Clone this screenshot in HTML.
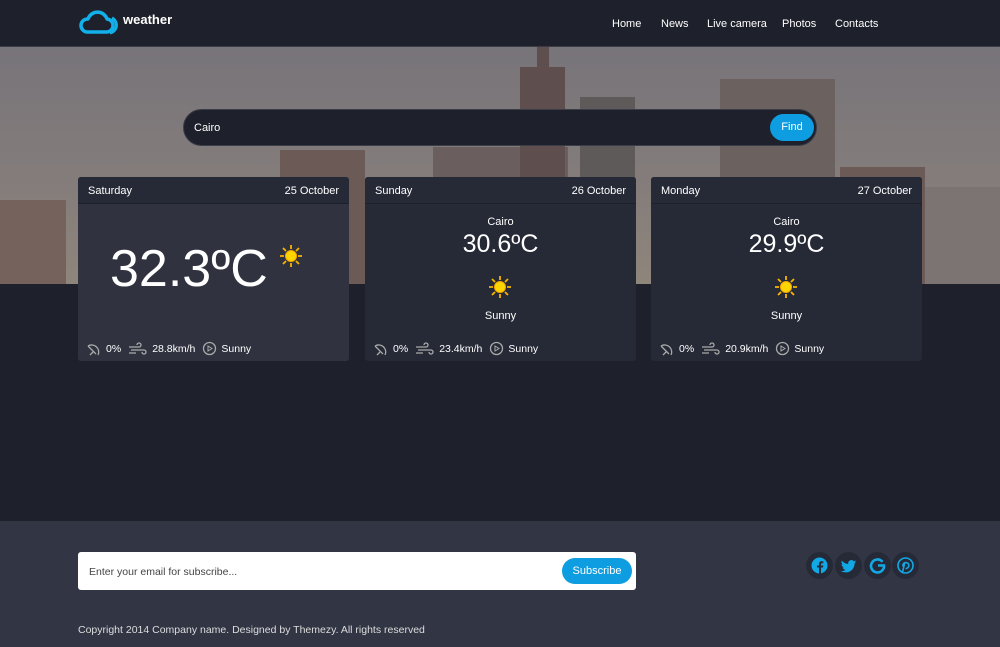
<!DOCTYPE html>
<html><head><meta charset="utf-8"><style>
*{margin:0;padding:0;box-sizing:border-box}
body{width:1000px;height:647px;overflow:hidden;background:#1e202b;font-family:"Liberation Sans",sans-serif;color:#fff;position:relative}
.hdr{position:absolute;left:0;top:0;width:1000px;height:47px;background:#1e202b;border-bottom:1px solid #3a3c48}
.logo{position:absolute;left:78px;top:8px}
.lt{position:absolute;left:123px;top:12px;font-weight:bold;font-size:13px;white-space:nowrap}
.nav{position:absolute;top:18px;font-size:11px}
.hero{position:absolute;left:0;top:47px;width:1000px;height:237px;background:linear-gradient(#77747a,#857d7b 60%,#8e857b);overflow:hidden}
.b{position:absolute;background:#6c5a56}
.search{position:absolute;left:183px;top:109px;width:634px;height:37px;background:#1e202b;border-radius:19px;border:1px solid #3a3c48}
.search .t{position:absolute;left:10px;top:12px;font-size:11px}
.find{position:absolute;right:2px;top:4px;width:44px;height:27px;border-radius:14px;background:#0d9de0;font-size:11px;text-align:center;line-height:27px}
.card{position:absolute;top:177px;width:271px;height:184px;background:#262936;border-radius:3px}
.card.a{background:#30333f}
.ch{height:27px;border-bottom:1px solid #1e202b;background:#262936;border-radius:3px 3px 0 0;font-size:11px;padding:8px 10px;display:flex;justify-content:space-between}
.city{position:absolute;top:39px;width:100%;text-align:center;font-size:11px}
.temp{position:absolute;top:53px;width:100%;text-align:center;font-size:25px}
.sunny{position:absolute;top:133px;width:100%;text-align:center;font-size:11px}
.ft{position:absolute;left:8px;top:164px;font-size:10.5px;display:flex;align-items:center;gap:4px}
.foot{position:absolute;left:0;top:521px;width:1000px;height:126px;background:#323544}
.email{position:absolute;left:78px;top:31px;width:558px;height:38px;background:#fff;border-radius:3px}
.email .t{position:absolute;left:11px;top:14px;font-size:10.5px;color:#444}
.sub{position:absolute;right:4px;top:6px;width:70px;height:26px;border-radius:13px;background:#0d9de0;color:#fff;font-size:11px;text-align:center;line-height:26px}
.soc{position:absolute;top:31px;width:27px;height:27px;border-radius:50%;background:#262936}
.copy{position:absolute;left:78px;top:103px;font-size:10.5px;color:#ddd}
</style></head><body>
<div class="hero">
<div class="b" style="left:0;top:153px;width:66px;height:90px;background:#76625d"></div>
<div class="b" style="left:280px;top:103px;width:85px;height:140px"></div>
<div class="b" style="left:433px;top:100px;width:135px;height:140px;background:#6a5e5e"></div>
<div class="b" style="left:520px;top:20px;width:45px;height:200px;background:#5f4e4e"></div>
<div class="b" style="left:537px;top:0;width:12px;height:30px;background:#5f4e4e"></div>
<div class="b" style="left:580px;top:50px;width:55px;height:180px;background:#5e5a5a"></div>
<div class="b" style="left:720px;top:32px;width:115px;height:210px;background:#6b6260"></div>
<div class="b" style="left:840px;top:120px;width:85px;height:120px"></div>
<div class="b" style="left:925px;top:140px;width:75px;height:100px;background:#7c7472"></div>
</div>
<div class="hdr">
<svg class="logo" width="44" height="28" viewBox="0 0 44 28"><path d="M9 24 H28 A6.500 6.500 0 0 0 29 11 A10 10 0 0 0 10 11 A6.500 6.500 0 0 0 9 24 Z" fill="none" stroke="#12b0ea" stroke-width="3.500" stroke-linejoin="round"/><path d="M34 10 A8 8 0 0 1 32 25" fill="none" stroke="#12b0ea" stroke-width="3"/></svg>
<div class="lt">weather</div>
<div class="nav" style="left:612px">Home</div>
<div class="nav" style="left:661px">News</div>
<div class="nav" style="left:707px">Live camera</div>
<div class="nav" style="left:782px">Photos</div>
<div class="nav" style="left:835px">Contacts</div>
</div>
<div class="search"><div class="t">Cairo</div><div class="find">Find</div></div>

<div class="card a" style="left:78px"><div class="ch"><span>Saturday</span><span>25 October</span></div>
<div style="position:absolute;left:32px;top:62px;font-size:52px;line-height:60px">32.3ºC</div>
<svg style="position:absolute;left:201px;top:67px" width="24" height="24" viewBox="0 0 24 24"><g stroke="#f7b500" stroke-width="1.8"><path d="M12 1v4M12 19v4M1 12h4M19 12h4M4 4l3 3M17 17l3 3M20 4l-3 3M7 17l-3 3"/></g><circle cx="12" cy="12" r="5.5" fill="#ffd500" stroke="#f5a800"/></svg>
<div class="ft"><svg width="16" height="14"><path d="M2 4a7 7 0 0 1 10 9M2 4l8 8M7 10l-3 3" fill="none" stroke="#aaa" stroke-width="1.3"/></svg>0% <svg width="20" height="14" style="margin-left:3px"><path d="M1 5h10a2 2 0 1 0-2-2M3 8h13a2 2 0 1 1-2 2M1 11h7" fill="none" stroke="#aaa" stroke-width="1.3"/></svg>28.8km/h <svg width="15" height="15" style="margin-left:3px"><circle cx="7.5" cy="7.5" r="6" fill="none" stroke="#aaa" stroke-width="1.3"/><path d="M6 5l4 2.5L6 10z" fill="none" stroke="#aaa"/></svg>Sunny</div></div>

<div class="card" style="left:365px"><div class="ch"><span>Sunday</span><span>26 October</span></div>
<div class="city">Cairo</div><div class="temp">30.6ºC</div>
<svg style="position:absolute;left:123px;top:98px" width="24" height="24" viewBox="0 0 24 24"><g stroke="#f7b500" stroke-width="1.8"><path d="M12 1v4M12 19v4M1 12h4M19 12h4M4 4l3 3M17 17l3 3M20 4l-3 3M7 17l-3 3"/></g><circle cx="12" cy="12" r="5.5" fill="#ffd500" stroke="#f5a800"/></svg>
<div class="sunny">Sunny</div>
<div class="ft"><svg width="16" height="14"><path d="M2 4a7 7 0 0 1 10 9M2 4l8 8M7 10l-3 3" fill="none" stroke="#aaa" stroke-width="1.3"/></svg>0% <svg width="20" height="14" style="margin-left:3px"><path d="M1 5h10a2 2 0 1 0-2-2M3 8h13a2 2 0 1 1-2 2M1 11h7" fill="none" stroke="#aaa" stroke-width="1.3"/></svg>23.4km/h <svg width="15" height="15" style="margin-left:3px"><circle cx="7.5" cy="7.5" r="6" fill="none" stroke="#aaa" stroke-width="1.3"/><path d="M6 5l4 2.5L6 10z" fill="none" stroke="#aaa"/></svg>Sunny</div></div>

<div class="card" style="left:651px"><div class="ch"><span>Monday</span><span>27 October</span></div>
<div class="city">Cairo</div><div class="temp">29.9ºC</div>
<svg style="position:absolute;left:123px;top:98px" width="24" height="24" viewBox="0 0 24 24"><g stroke="#f7b500" stroke-width="1.8"><path d="M12 1v4M12 19v4M1 12h4M19 12h4M4 4l3 3M17 17l3 3M20 4l-3 3M7 17l-3 3"/></g><circle cx="12" cy="12" r="5.5" fill="#ffd500" stroke="#f5a800"/></svg>
<div class="sunny">Sunny</div>
<div class="ft"><svg width="16" height="14"><path d="M2 4a7 7 0 0 1 10 9M2 4l8 8M7 10l-3 3" fill="none" stroke="#aaa" stroke-width="1.3"/></svg>0% <svg width="20" height="14" style="margin-left:3px"><path d="M1 5h10a2 2 0 1 0-2-2M3 8h13a2 2 0 1 1-2 2M1 11h7" fill="none" stroke="#aaa" stroke-width="1.3"/></svg>20.9km/h <svg width="15" height="15" style="margin-left:3px"><circle cx="7.5" cy="7.5" r="6" fill="none" stroke="#aaa" stroke-width="1.3"/><path d="M6 5l4 2.5L6 10z" fill="none" stroke="#aaa"/></svg>Sunny</div></div>

<div class="foot">
<div class="email"><div class="t">Enter your email for subscribe...</div><div class="sub">Subscribe</div></div>
<div class="soc" style="left:806px"><svg width="27" height="27"><circle cx="13.5" cy="13.5" r="8" fill="#12a8e6"/><path d="M15 21.500v-6h2l.3-2H15v-1.300c0-.6.3-1 1-1h1.300V9.300c-.4 0-1-.1-1.700-.1-1.700 0-2.600 1-2.600 2.700V13.500h-2v2h2v6z" fill="#262936"/></svg></div>
<div class="soc" style="left:835px"><svg width="27" height="27"><path d="M21 9.5c-.6.3-1.2.4-1.8.5.7-.4 1.1-1 1.4-1.7-.6.4-1.3.6-2 .8a3.1 3.1 0 0 0-5.3 2.8c-2.6-.1-4.9-1.4-6.4-3.3-.8 1.4-.3 3.2 1 4.1-.5 0-1-.2-1.4-.4 0 1.5 1.1 2.8 2.5 3.1-.5.1-.9.2-1.4.1.4 1.2 1.6 2.1 2.9 2.2a6.3 6.3 0 0 1-4.6 1.3c1.4.9 3.1 1.4 4.8 1.4 5.8 0 9-4.9 8.9-9.2.6-.5 1.1-1 1.5-1.6z" fill="#12a8e6"/></svg></div>
<div class="soc" style="left:864px"><svg width="27" height="27"><path d="M18.500 9.800A6.500 6.500 0 1 0 20 13.500H14" fill="none" stroke="#12a8e6" stroke-width="2.600"/></svg></div>
<div class="soc" style="left:892px"><svg width="27" height="27"><circle cx="13.5" cy="13.5" r="7.5" fill="none" stroke="#12a8e6" stroke-width="1.6"/><path d="M12.500 11.500l-2 9M11 14.500a3 3 0 1 1 2.500 2" fill="none" stroke="#12a8e6" stroke-width="1.6"/></svg></div>
<div class="copy">Copyright 2014 Company name. Designed by Themezy. All rights reserved</div>
</div>
</body></html>
